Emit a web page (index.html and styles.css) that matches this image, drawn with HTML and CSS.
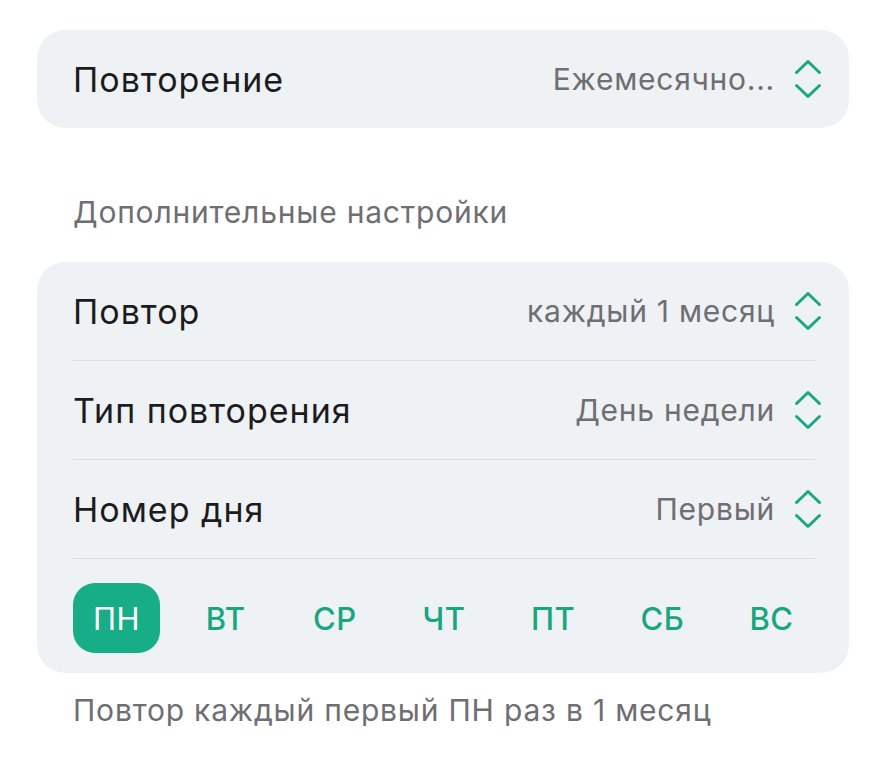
FILE: index.html
```html
<!DOCTYPE html>
<html lang="ru">
<head>
<meta charset="utf-8">
<title>Повторение</title>
<link rel="stylesheet" href="styles.css">
</head>
<body>
<main class="screen">
  <section class="card">
    <div class="row">
      <span class="row-label">Повторение</span>
      <span class="row-value">Ежемесячно...
        <svg class="stepper" viewBox="0 0 28 44" aria-hidden="true"><path d="M2.5 15.5 L14 4.5 L25.5 15.5 M2.5 28.5 L14 39.5 L25.5 28.5"/></svg>
      </span>
    </div>
  </section>

  <h2 class="section-title">Дополнительные настройки</h2>

  <section class="card">
    <div class="row divided">
      <span class="row-label">Повтор</span>
      <span class="row-value">каждый 1 месяц
        <svg class="stepper" viewBox="0 0 28 44" aria-hidden="true"><path d="M2.5 15.5 L14 4.5 L25.5 15.5 M2.5 28.5 L14 39.5 L25.5 28.5"/></svg>
      </span>
    </div>
    <div class="row divided">
      <span class="row-label">Тип повторения</span>
      <span class="row-value">День недели
        <svg class="stepper" viewBox="0 0 28 44" aria-hidden="true"><path d="M2.5 15.5 L14 4.5 L25.5 15.5 M2.5 28.5 L14 39.5 L25.5 28.5"/></svg>
      </span>
    </div>
    <div class="row divided">
      <span class="row-label">Номер дня</span>
      <span class="row-value">Первый
        <svg class="stepper" viewBox="0 0 28 44" aria-hidden="true"><path d="M2.5 15.5 L14 4.5 L25.5 15.5 M2.5 28.5 L14 39.5 L25.5 28.5"/></svg>
      </span>
    </div>
    <div class="days">
      <button class="day active">ПН</button>
      <button class="day">ВТ</button>
      <button class="day">СР</button>
      <button class="day">ЧТ</button>
      <button class="day">ПТ</button>
      <button class="day">СБ</button>
      <button class="day">ВС</button>
    </div>
  </section>

  <p class="summary">Повтор каждый первый ПН раз в 1 месяц</p>
</main>
</body>
</html>
```

FILE: styles.css
```css
* { box-sizing: border-box; }

html, body {
  margin: 0;
  background: #ffffff;
}

body {
  font-family: Inter, "Noto Sans", "Liberation Sans", sans-serif;
  color: #1c1c1e;
}

.screen {
  padding: 30px 37px 0 37px;
}

.card {
  background: #eff2f5;
  border-radius: 28px;
  padding: 0 27px 0 36px;
}

.row {
  height: 98px;
  display: flex;
  align-items: center;
  justify-content: space-between;
}

.row.divided {
  height: 99px;
  border-bottom: 1px solid #d9dce0;
  margin-right: 7px;
}

.row.divided .row-value {
  margin-right: -7px;
}

.row-label {
  font-size: 34px;
  font-weight: 400;
  letter-spacing: 1px;
  color: #1c1c1e;
}

.row-value {
  display: flex;
  align-items: center;
  gap: 19px;
  font-size: 30px;
  letter-spacing: 0.75px;
  color: #6e6e73;
}

.stepper {
  width: 28px;
  height: 44px;
  fill: none;
  stroke: #1aa880;
  stroke-width: 3;
  stroke-linecap: round;
  stroke-linejoin: round;
}

.section-title {
  margin: 0;
  padding: 68px 0 34px 36px;
  font-size: 30px;
  font-weight: 400;
  letter-spacing: 0.8px;
  color: #6e6e73;
  line-height: 32px;
}

.days {
  display: flex;
  justify-content: space-between;
  padding: 24px 7px 20px 0;
}

.day {
  width: 87px;
  height: 70px;
  border: 0;
  border-radius: 22px;
  background: transparent;
  font-family: inherit;
  font-size: 31px;
  font-weight: 500;
  letter-spacing: 0.5px;
  color: #18a67f;
  padding: 0;
}

.day.active {
  background: #17ad86;
  color: #ffffff;
  font-weight: 400;
}

.summary {
  margin: 0;
  padding: 21px 0 0 36px;
  font-size: 30px;
  letter-spacing: 0.8px;
  color: #6e6e73;
  line-height: 32px;
}
```
